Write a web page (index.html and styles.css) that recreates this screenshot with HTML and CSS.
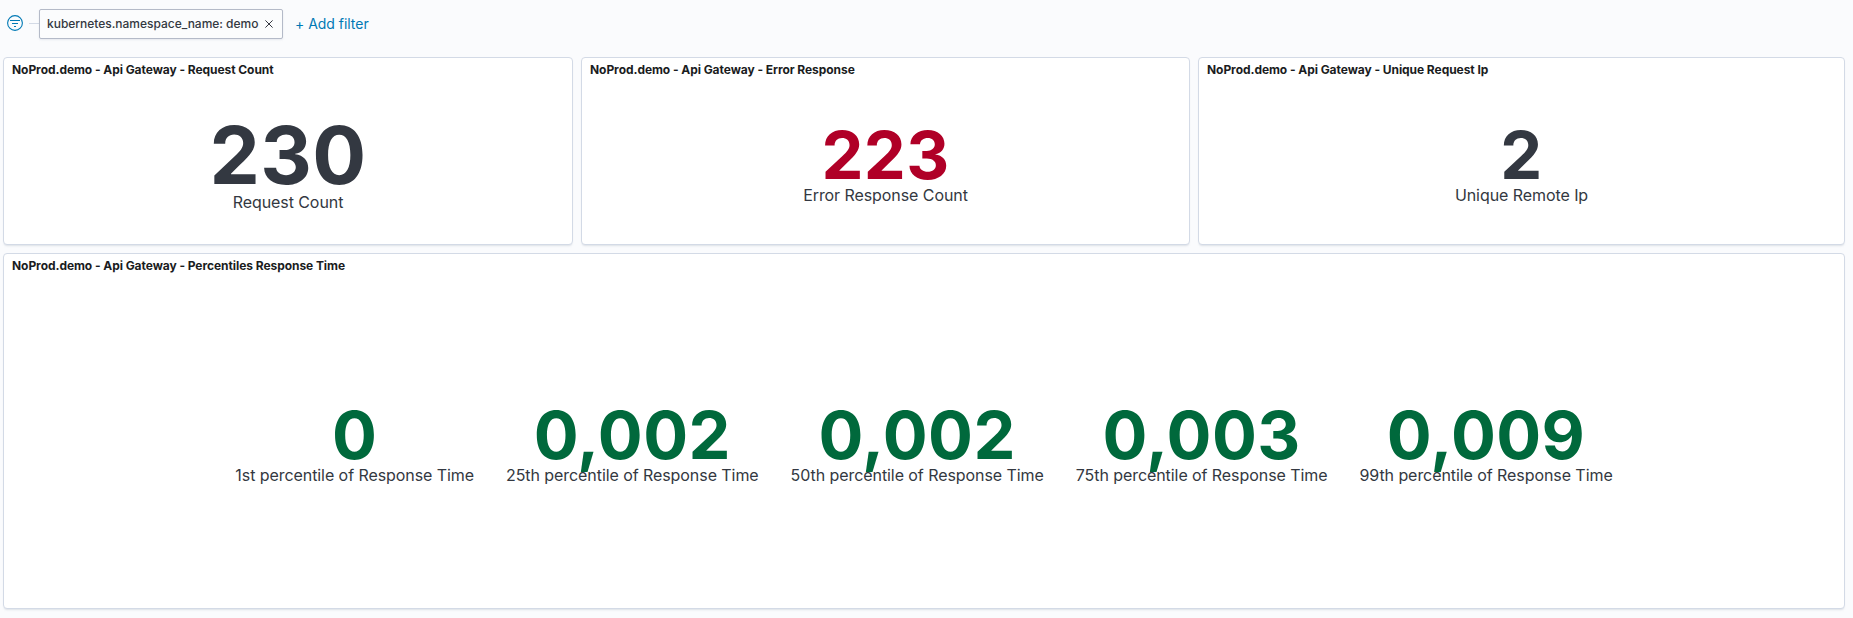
FILE: index.html
```
<!DOCTYPE html>
<html lang="en">
<head>
<meta charset="utf-8">
<title>Api Gateway dashboard</title>
<link rel="stylesheet" href="styles.css">
</head>
<body>
<div class="filter-bar">
  <svg class="filter-icon" width="16" height="16" viewBox="0 0 16 16" fill="none" stroke="#0079b5" stroke-width="1.1"><circle cx="8" cy="8" r="7.4"/><path d="M3 5.5h10M5 8.5h6M7 11.5h2"/></svg>
  <span class="branch"></span>
  <div class="pill"><span>kubernetes.namespace_name: demo</span>
    <svg class="close" width="8" height="8" viewBox="0 0 8 8" fill="none" stroke="#343741"><path d="M.4 .4l7.2 7.2M7.6 .4L.4 7.6"/></svg>
  </div>
  <a class="add">+ Add filter</a>
</div>
<main class="grid">
  <section class="panel">
    <h2 class="title">NoProd.demo - Api Gateway - Request Count</h2>
    <div class="metrics"><div class="metric"><div class="value large">230</div><div class="label">Request Count</div></div></div>
  </section>
  <section class="panel">
    <h2 class="title">NoProd.demo - Api Gateway - Error Response</h2>
    <div class="metrics"><div class="metric"><div class="value red">223</div><div class="label">Error Response Count</div></div></div>
  </section>
  <section class="panel">
    <h2 class="title">NoProd.demo - Api Gateway - Unique Request Ip</h2>
    <div class="metrics"><div class="metric"><div class="value">2</div><div class="label">Unique Remote Ip</div></div></div>
  </section>
  <section class="panel wide">
    <h2 class="title">NoProd.demo - Api Gateway - Percentiles Response Time</h2>
    <div class="metrics">
      <div class="metric"><div class="value green">0</div><div class="label">1st percentile of Response Time</div></div>
      <div class="metric"><div class="value green">0,002</div><div class="label">25th percentile of Response Time</div></div>
      <div class="metric"><div class="value green">0,002</div><div class="label">50th percentile of Response Time</div></div>
      <div class="metric"><div class="value green">0,003</div><div class="label">75th percentile of Response Time</div></div>
      <div class="metric"><div class="value green">0,009</div><div class="label">99th percentile of Response Time</div></div>
    </div>
  </section>
</main>
</body>
</html>
```
FILE: styles.css
```
* { box-sizing: border-box; }
body {
  margin: 0;
  height: 618px;
  overflow: hidden;
  background: #fafbfd;
  color: #333841;
  font-family: Inter, "Liberation Sans", sans-serif;
  font-size: 16px;
  letter-spacing: -.07px;
}
.filter-bar {
  display: flex;
  align-items: center;
  height: 57px;
  padding: 0 0 9px 7px;
}
.filter-icon { margin-top: -2px; }
.branch {
  width: 10px;
  height: 1px;
  margin: -2px 0 0 6px;
  background: #d3dae6;
}
.pill {
  display: flex;
  align-items: center;
  justify-content: space-between;
  width: 244px;
  height: 30px;
  padding: 0 9px 0 7px;
  border: 1px solid #b4bac8;
  border-radius: 2px;
  background: #fbfcfd;
  box-shadow: 0 1px 2px rgba(152, 162, 179, .2);
  font-size: 12px;
  font-weight: 500;
  letter-spacing: -.02px;
  white-space: nowrap;
}
.pill span { margin-top: -1px; }
.add {
  margin: -2px 0 0 12px;
  color: #0079b5;
  font-size: 14px;
  letter-spacing: -.03px;
}
.grid {
  display: grid;
  grid-template-columns: 570px 609px 647px;
  grid-template-rows: 188px 356px;
  gap: 8px;
  padding-left: 3px;
}
.panel {
  display: flex;
  flex-direction: column;
  border: 1px solid #d3dae6;
  border-radius: 4px;
  background: #fff;
  box-shadow: 0 2px 2px -1px rgba(152, 162, 179, .3);
}
.wide { grid-column: 1 / -1; }
.title {
  margin: 0;
  padding: 0 8px;
  color: #1a1c21;
  font-size: 12px;
  font-weight: 700;
  letter-spacing: -.06px;
  line-height: 24px;
}
.metrics {
  flex: 1;
  display: flex;
  align-items: center;
  justify-content: center;
}
.metric {
  padding: 0 16px;
  text-align: center;
}
.value {
  margin: 3px 0 -5px;
  font-size: 66.667px;
  font-weight: 700;
  letter-spacing: .4px;
  line-height: 1;
}
.large {
  margin: 2.5px 0 -4.5px;
  font-size: 80px;
}
.red { color: #b00027; }
.green { color: #00693c; }
.label { line-height: 24px; }
```
